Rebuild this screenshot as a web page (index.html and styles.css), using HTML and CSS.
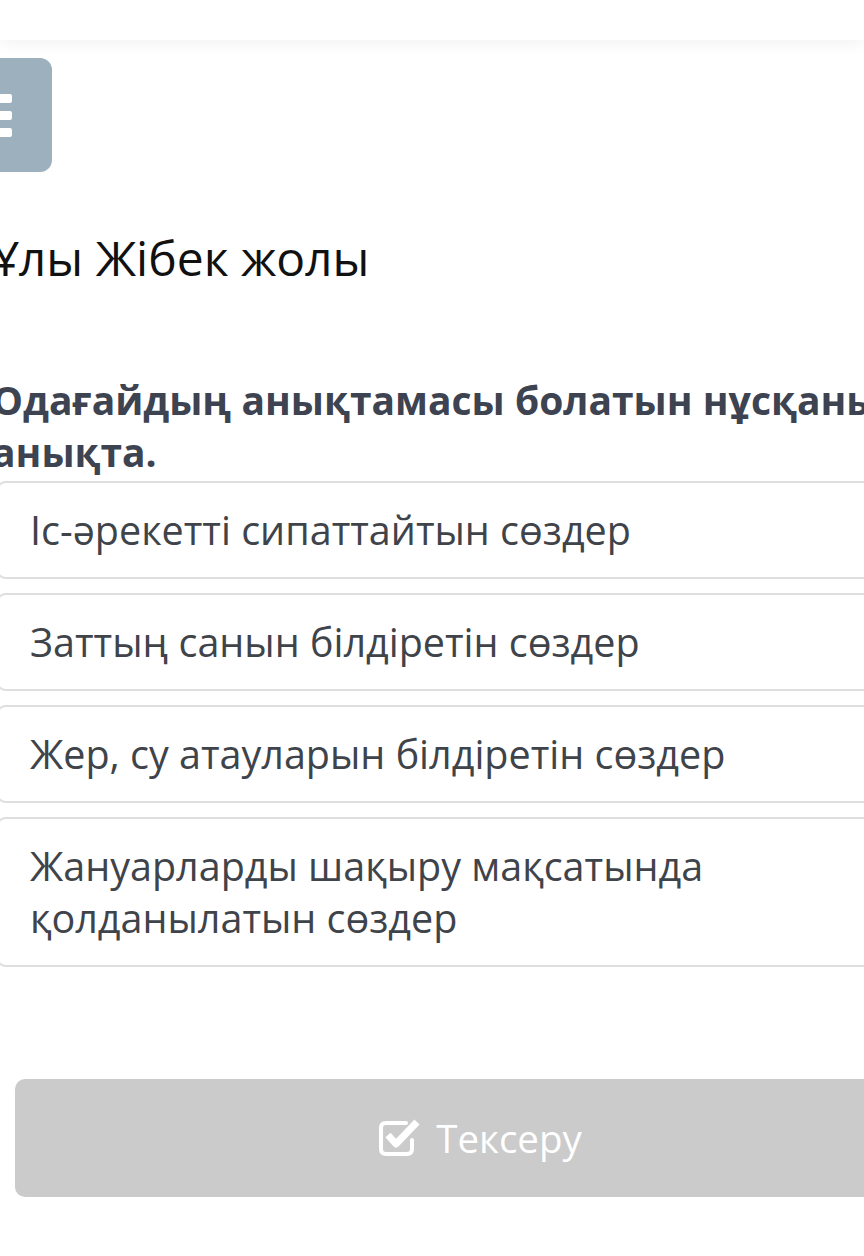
FILE: index.html
```html
<!DOCTYPE html>
<html lang="kk">
<head>
    <meta charset="UTF-8">
    <meta name="viewport" content="width=device-width, initial-scale=1.0">
    <title>Ұлы Жібек жолы</title>
    <link rel="stylesheet" href="styles.css">
</head>
<body>

    <div class="topbar"></div>

    <div class="content">
        <button class="menu-btn" aria-label="Menu">
            <span></span>
            <span></span>
            <span></span>
        </button>

        <h1 class="title">Ұлы Жібек жолы</h1>

        <div class="question">Одағайдың анықтамасы болатын нұсқаны анықта.</div>

        <div class="options">
            <div class="option">Іс-әрекетті сипаттайтын сөздер</div>
            <div class="option">Заттың санын білдіретін сөздер</div>
            <div class="option">Жер, су атауларын білдіретін сөздер</div>
            <div class="option">Жануарларды шақыру мақсатында қолданылатын сөздер</div>
        </div>

        <button class="check-btn">
            <svg width="44" height="38" viewBox="0 0 44 38">
                <path d="M28 4 H8 Q3 4 3 9 V30 Q3 35 8 35 H29 Q34 35 34 30 V21" fill="none" stroke="#fff" stroke-width="4" stroke-linecap="round"/>
                <path d="M10 16 L18 25 L39 3" fill="none" stroke="#fff" stroke-width="7" stroke-linejoin="round"/>
            </svg>
            <span>Тексеру</span>
        </button>
    </div>

</body>
</html>
```

FILE: styles.css
```css
html, body {
    margin: 0;
    padding: 0;
    background: #fff;
    font-family: 'Open Sans', 'Noto Sans', sans-serif;
    overflow-x: hidden;
}

.topbar {
    height: 40px;
    background: #fff;
    box-shadow: 0 4px 14px rgba(0, 0, 0, 0.05);
    position: relative;
    z-index: 1;
}

.content {
    margin-left: -8px;
    width: 960px;
    padding-top: 18px;
}

.menu-btn {
    display: flex;
    flex-direction: column;
    align-items: flex-end;
    justify-content: center;
    gap: 8px;
    margin-left: -32px;
    width: 92px;
    height: 114px;
    padding: 0 40px 0 0;
    background: #9cb0be;
    border: none;
    border-radius: 12px;
}

.menu-btn span {
    display: block;
    width: 40px;
    height: 9px;
    background: #fff;
    border-radius: 2px;
}

.title {
    margin: 58px 0 0;
    font-size: 48px;
    font-weight: 400;
    line-height: 56px;
    color: #111;
}

.question {
    margin-top: 88px;
    font-size: 39px;
    font-weight: 700;
    line-height: 52px;
    color: #3d4350;
}

.options {
    display: flex;
    flex-direction: column;
    gap: 14px;
    margin: 3px 0 0 4px;
}

.option {
    padding: 21px 32px;
    border: 2px solid #dedede;
    border-radius: 10px;
    font-size: 39.5px;
    line-height: 52px;
    color: #3f434a;
}

.option:last-child {
    padding-right: 220px;
}

.check-btn {
    display: flex;
    align-items: center;
    justify-content: center;
    gap: 14px;
    margin: 112px 0 0 23px;
    width: 930px;
    height: 118px;
    background: #cbcbcb;
    border: none;
    border-radius: 10px;
    color: #fff;
    font-family: 'Open Sans', 'Noto Sans', sans-serif;
    font-size: 38.5px;
}
```
